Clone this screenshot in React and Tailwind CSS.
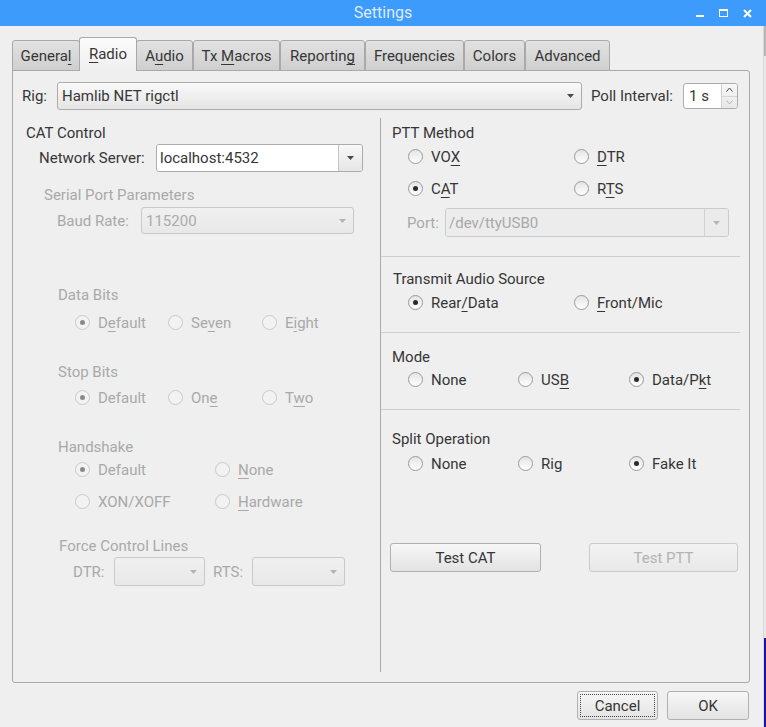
import React from "react";

const U = ({ children }) => (
  <span className="underline decoration-1 underline-offset-[3px]">{children}</span>
);

const Arrow = ({ dim }) => (
  <svg width="7" height="4" viewBox="0 0 7 4">
    <path d="M0 0 L7 0 L3.5 4 Z" fill={dim ? "#b4b4b4" : "#4a4a4a"} />
  </svg>
);

const Radio = ({ checked, disabled, children, className = "" }) => (
  <div className={`flex items-center h-[18px] ${className}`}>
    <span
      className={`w-[15px] h-[15px] rounded-full border flex items-center justify-center shrink-0 ${
        disabled
          ? "border-[#c9c9c9] bg-[#f2f2f2]"
          : "border-[#9a9a9a] bg-gradient-to-b from-[#e4e4e4] to-[#ffffff]"
      }`}
    >
      {checked && (
        <span
          className={`w-[5px] h-[5px] rounded-full ${disabled ? "bg-[#8a8a8a]" : "bg-[#2a2a2a]"}`}
        />
      )}
    </span>
    <span className={`ml-[8px] leading-[18px] mt-[2px] ${disabled ? "text-[#a9a9a9]" : ""}`}>
      {children}
    </span>
  </div>
);

const Combo = ({ text, width, height = 28, disabled, editable }) => {
  if (editable) {
    return (
      <div
        className={`flex rounded-[3px] border overflow-hidden ${
          disabled ? "border-[#cbcbcb]" : "border-[#acacac]"
        }`}
        style={{ width, height }}
      >
        <div
          className={`flex-1 flex items-center pl-[3px] ${
            disabled ? "bg-[#ececec] text-[#a9a9a9]" : "bg-white"
          }`}
        >
          {text}
        </div>
        <div
          className={`w-[24px] flex items-center justify-center border-l ${
            disabled
              ? "border-[#d2d2d2] bg-[#ebebeb]"
              : "border-[#c4c4c4] bg-gradient-to-b from-[#f8f8f8] to-[#e6e6e6]"
          }`}
        >
          <Arrow dim={disabled} />
        </div>
      </div>
    );
  }
  return (
    <div
      className={`flex items-center justify-between rounded-[3px] border pl-[4px] pr-[7px] ${
        disabled
          ? "border-[#c9c9c9] bg-gradient-to-b from-[#f0f0f0] to-[#e8e8e8] text-[#ababab]"
          : "border-[#acacac] bg-gradient-to-b from-[#f9f9f9] to-[#e5e5e5]"
      }`}
      style={{ width, height }}
    >
      <span>{text}</span>
      <Arrow dim={disabled} />
    </div>
  );
};

const Button = ({ children, width, disabled, focus, className = "" }) => (
  <div
    className={`h-[29px] rounded-[3px] border flex items-center justify-center p-[2px] ${
      disabled
        ? "border-[#cbcbcb] bg-gradient-to-b from-[#f3f3f3] to-[#e8e8e8] text-[#b3b3b3]"
        : "border-[#b0b0b0] bg-gradient-to-b from-[#f7f7f7] to-[#e3e3e3]"
    } ${className}`}
    style={{ width }}
  >
    <div
      className={`w-full h-full flex items-center justify-center ${
        focus ? "border border-dotted border-[#444]" : ""
      }`}
    >
      {children}
    </div>
  </div>
);

const Tab = ({ children, selected, width }) =>
  selected ? (
    <div
      className="relative z-10 h-[34px] -mx-[1px] rounded-t-[3px] border border-b-0 border-[#a9a9a9] bg-gradient-to-b from-[#fbfbfb] to-[#efefef] flex items-center justify-center pb-[2px]"
      style={{ width }}
    >
      <span>{children}</span>
    </div>
  ) : (
    <div
      className="h-[31px] rounded-t-[3px] border border-[#a9a9a9] bg-gradient-to-b from-[#e2e2e2] to-[#cfcfcf] flex items-center justify-center pt-[1px]"
      style={{ width }}
    >
      <span>{children}</span>
    </div>
  );

const Sep = () => <div className="h-px w-[359px] bg-[#cdcdcd]" />;

export default function App() {
  return (
    <div
      className="w-[766px] h-[727px] bg-[#efefef] overflow-hidden text-[15px] text-[#363636] leading-[18px]"
      style={{ fontFamily: "Roboto, 'Liberation Sans', sans-serif" }}
    >
      {/* title bar */}
      <div className="h-[26px] bg-[#3d9bfc] grid grid-cols-[1fr_auto_1fr] items-center">
        <div />
        <div className="text-[#dfeafc] text-[16px]">Settings</div>
        <div className="flex justify-end items-center gap-[15px] pr-[14px]">
          <div className="w-[8px] h-[2px] bg-white mt-[6px]" />
          <div className="w-[9px] h-[8px] border border-white border-t-2" />
          <svg width="9" height="9" viewBox="0 0 9 9">
            <path d="M1 1 L8 8 M8 1 L1 8" stroke="white" strokeWidth="2" />
          </svg>
        </div>
      </div>

      <div className="flex h-[701px]">
        <div className="w-[763px]">
          {/* tabs */}
          <div className="mt-[11px] ml-[12px] h-[34px] flex items-end -mb-px relative">
            <Tab width={68}>
              Genera<U>l</U>
            </Tab>
            <Tab selected width={58}>
              <U>R</U>adio
            </Tab>
            <Tab width={57}>
              A<U>u</U>dio
            </Tab>
            <Tab width={87}>
              Tx <U>M</U>acros
            </Tab>
            <Tab width={85}>
              Reportin<U>g</U>
            </Tab>
            <Tab width={99}>Frequencies</Tab>
            <Tab width={61}>Colors</Tab>
            <Tab width={85}>Advanced</Tab>
          </div>

          {/* pane */}
          <div className="ml-[12px] w-[738px] h-[613px] border border-[#a9a9a9] rounded-[3px] rounded-tl-none">
            <div className="mt-[11px] flex items-center h-[28px]">
              <span className="ml-[9px] w-[35px]">Rig:</span>
              <Combo text="Hamlib NET rigctl" width={525} />
              <span className="ml-[9px] w-[92px]">Poll Interval:</span>
              <div className="w-[55px] h-[26px] flex rounded-[3px] border border-[#acacac] bg-white overflow-hidden">
                <div className="flex-1 flex items-center pl-[5px]">1 s</div>
                <div className="w-[16px] flex flex-col border-l border-[#d0d0d0] bg-gradient-to-b from-[#f8f8f8] to-[#e8e8e8]">
                  <div className="flex-1 flex items-center justify-center">
                    <svg width="7" height="5" viewBox="0 0 7 5">
                      <path d="M0.5 4.5 L3.5 1 L6.5 4.5" stroke="#444" fill="none" />
                    </svg>
                  </div>
                  <div className="flex-1 flex items-center justify-center border-t border-[#d6d6d6]">
                    <svg width="7" height="5" viewBox="0 0 7 5">
                      <path d="M0.5 0.5 L3.5 4 L6.5 0.5" stroke="#b5b5b5" fill="none" />
                    </svg>
                  </div>
                </div>
              </div>
            </div>

            <div className="mt-[8px] flex h-[554px]">
              {/* left column */}
              <div className="w-[367px]">
                <div className="mt-[6px] ml-[13px] h-[18px]">CAT Control</div>
                <div className="mt-[2px] flex items-center h-[28px]">
                  <span className="ml-[26px] w-[117px]">Network Server:</span>
                  <Combo text="localhost:4532" width={207} editable />
                </div>
                <div className="mt-[14px] ml-[31px] h-[18px] text-[#a9a9a9]">Serial Port Parameters</div>
                <div className="mt-[3px] flex items-center h-[27px] text-[#a9a9a9]">
                  <span className="ml-[44px] w-[84px]">Baud Rate:</span>
                  <Combo text="115200" width={213} height={27} disabled />
                </div>

                <div className="mt-[52px] ml-[45px] h-[18px] text-[#a9a9a9]">Data Bits</div>
                <div className="mt-[9px] ml-[62px] flex">
                  <Radio checked disabled className="w-[93px]">
                    D<U>e</U>fault
                  </Radio>
                  <Radio disabled className="w-[94px]">
                    Se<U>v</U>en
                  </Radio>
                  <Radio disabled>
                    E<U>i</U>ght
                  </Radio>
                </div>

                <div className="mt-[32px] ml-[45px] h-[18px] text-[#a9a9a9]">Stop Bits</div>
                <div className="mt-[7px] ml-[62px] flex">
                  <Radio checked disabled className="w-[93px]">
                    Default
                  </Radio>
                  <Radio disabled className="w-[94px]">
                    On<U>e</U>
                  </Radio>
                  <Radio disabled>
                    T<U>w</U>o
                  </Radio>
                </div>

                <div className="mt-[32px] ml-[45px] h-[18px] text-[#a9a9a9]">Handshake</div>
                <div className="mt-[4px] ml-[62px] flex">
                  <Radio checked disabled className="w-[140px]">
                    Default
                  </Radio>
                  <Radio disabled>
                    <U>N</U>one
                  </Radio>
                </div>
                <div className="mt-[14px] ml-[62px] flex">
                  <Radio disabled className="w-[140px]">
                    XON/XOFF
                  </Radio>
                  <Radio disabled>
                    <U>H</U>ardware
                  </Radio>
                </div>

                <div className="mt-[27px] ml-[46px] h-[18px] text-[#a9a9a9]">Force Control Lines</div>
                <div className="mt-[2px] flex items-center h-[29px] text-[#a9a9a9]">
                  <span className="ml-[60px] w-[41px]">DTR:</span>
                  <Combo text="" width={91} height={29} disabled />
                  <span className="ml-[8px] w-[39px]">RTS:</span>
                  <Combo text="" width={93} height={29} disabled />
                </div>
              </div>

              {/* right column */}
              <div className="flex-1 border-l border-[#a9a9a9] h-[554px]">
                <div className="mt-[6px] ml-[11px] h-[18px]">PTT Method</div>
                <div className="mt-[5px] ml-[27px] flex">
                  <Radio className="w-[166px]">
                    VO<U>X</U>
                  </Radio>
                  <Radio>
                    <U>D</U>TR
                  </Radio>
                </div>
                <div className="mt-[14px] ml-[27px] flex">
                  <Radio checked className="w-[166px]">
                    C<U>A</U>T
                  </Radio>
                  <Radio>
                    R<U>T</U>S
                  </Radio>
                </div>
                <div className="mt-[11px] flex items-center h-[29px] text-[#a9a9a9]">
                  <span className="ml-[26px] w-[38px]">Port:</span>
                  <Combo text="/dev/ttyUSB0" width={284} height={29} disabled editable />
                </div>

                <div className="mt-[19px]">
                  <Sep />
                </div>
                <div className="mt-[13px] ml-[12px] h-[18px]">Transmit Audio Source</div>
                <div className="mt-[5px] ml-[27px] flex">
                  <Radio checked className="w-[166px]">
                    Rear<U>/</U>Data
                  </Radio>
                  <Radio>
                    <U>F</U>ront/Mic
                  </Radio>
                </div>

                <div className="mt-[21px]">
                  <Sep />
                </div>
                <div className="mt-[15px] ml-[11px] h-[18px]">Mode</div>
                <div className="mt-[4px] ml-[27px] flex">
                  <Radio className="w-[110px]">None</Radio>
                  <Radio className="w-[111px]">
                    US<U>B</U>
                  </Radio>
                  <Radio checked>
                    Data/P<U>k</U>t
                  </Radio>
                </div>

                <div className="mt-[21px]">
                  <Sep />
                </div>
                <div className="mt-[20px] ml-[11px] h-[18px]">Split Operation</div>
                <div className="mt-[6px] ml-[27px] flex">
                  <Radio className="w-[110px]">None</Radio>
                  <Radio className="w-[111px]">Rig</Radio>
                  <Radio checked>Fake It</Radio>
                </div>

                <div className="mt-[71px] ml-[9px] flex">
                  <Button width={151}>Test CAT</Button>
                  <Button width={149} disabled className="ml-[48px]">
                    Test PTT
                  </Button>
                </div>
              </div>
            </div>
          </div>

          {/* dialog buttons */}
          <div className="mt-[8px] flex justify-end pr-[14px]">
            <Button width={81} focus className="h-[28px]">
              Cancel
            </Button>
            <Button width={82} className="ml-[9px] h-[28px]">
              OK
            </Button>
          </div>
        </div>

        {/* sliver of the window behind */}
        <div className="flex-1 flex flex-col bg-[#e9e9e9] border-l border-[#d8d8d8]">
          <div className="h-[30px] bg-[#b5b5b5]" />
          <div className="flex-1" />
          <div className="h-[89px] bg-[#1616a0]" />
        </div>
      </div>
    </div>
  );
}
